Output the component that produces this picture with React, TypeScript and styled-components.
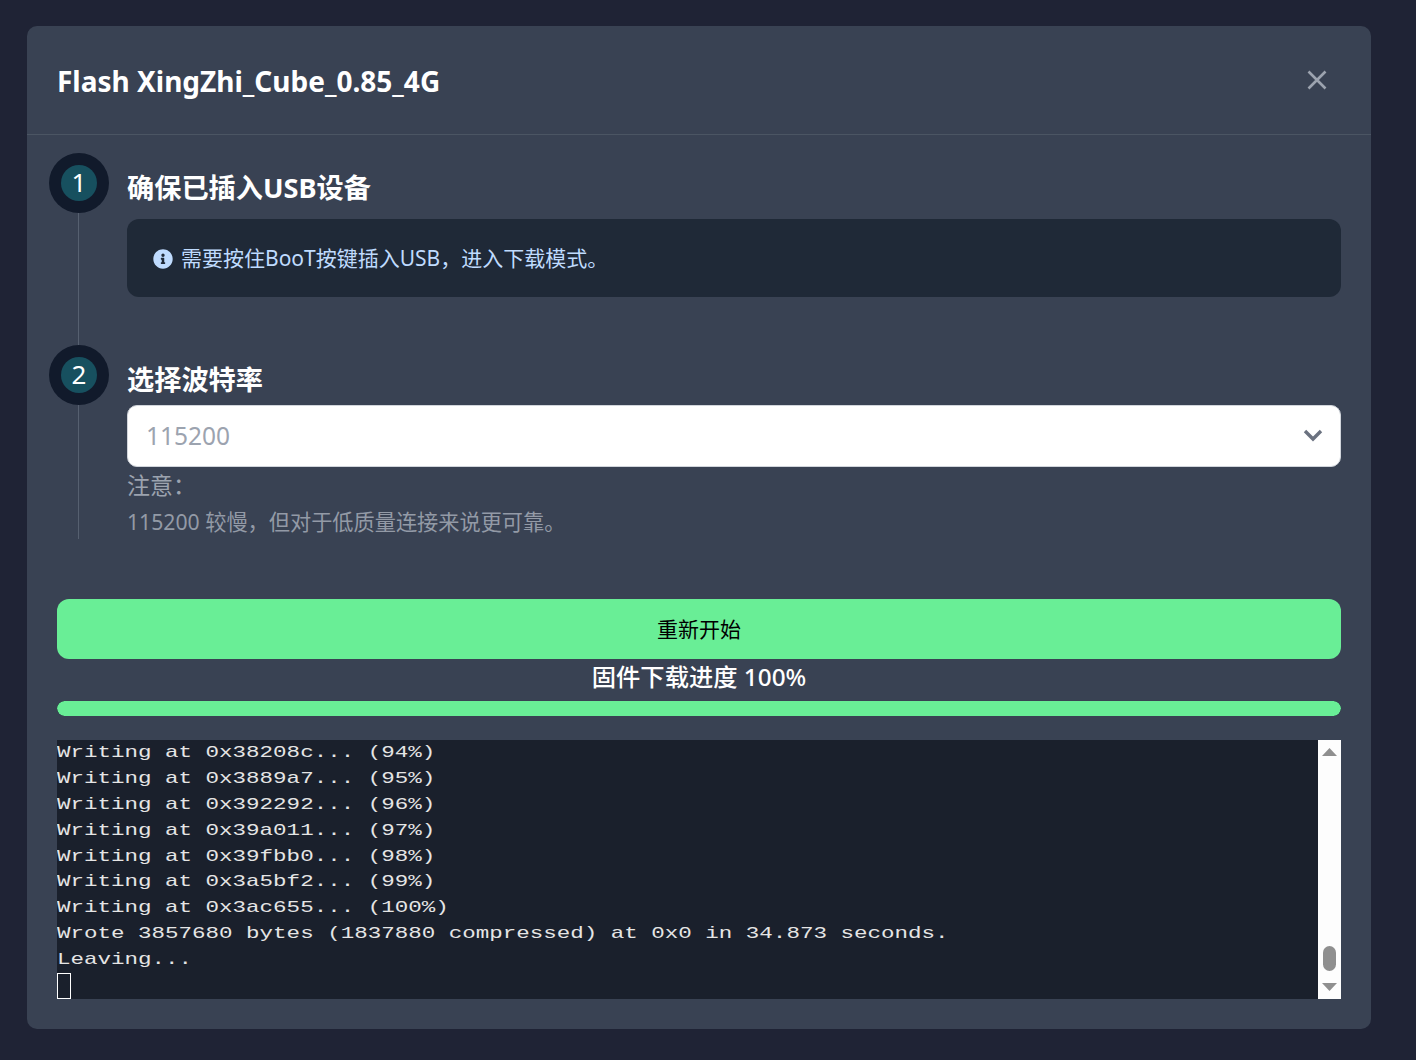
import React from 'react';
import styled, { createGlobalStyle } from 'styled-components';
import { FaInfoCircle } from 'react-icons/fa';

const Global = createGlobalStyle`
  html, body { margin: 0; padding: 0; background: #1f2335; }
  body { font-family: "Noto Sans", "Noto Sans CJK SC", sans-serif; overflow: hidden; }
  * { box-sizing: border-box; }
`;

const Page = styled.div`
  width: 1416px;
  height: 1060px;
  padding: 26px 45px 31px 27px;
`;

const Modal = styled.div`
  height: 1003px;
  background: #394253;
  border-radius: 10px;
  display: flex;
  flex-direction: column;
`;

const Header = styled.header`
  height: 109px;
  flex: none;
  padding: 0 42px 0 30px;
  display: flex;
  align-items: center;
  justify-content: space-between;
  border-bottom: 1px solid #4b5563;
`;

const Title = styled.h2`
  margin: 2px 0 0;
  color: #fff;
  font-size: 28px;
  line-height: 36px;
  font-weight: 700;
`;

const Close = styled.button`
  width: 24px;
  height: 24px;
  padding: 0;
  border: 0;
  background: none;
  color: #9ca3af;
  display: flex;
  align-items: center;
  justify-content: center;
`;

const Body = styled.div`
  flex: 1;
  padding: 18px 30px 0;
  display: flex;
  flex-direction: column;
`;

const Steps = styled.div`
  margin-left: -8px;
  display: flex;
  flex-direction: column;
`;

const Step = styled.section<{ $h: number }>`
  height: ${p => p.$h}px;
  display: flex;
  gap: 18px;
`;

const Rail = styled.div`
  width: 60px;
  flex: none;
  display: flex;
  flex-direction: column;
  align-items: center;
`;

const Badge = styled.div`
  width: 60px;
  height: 60px;
  flex: none;
  border-radius: 50%;
  background: #111a2b;
  display: flex;
  align-items: center;
  justify-content: center;
`;

const BadgeInner = styled.div`
  width: 36px;
  height: 36px;
  border-radius: 50%;
  background: #17505f;
  color: #fff;
  font-size: 26px;
  line-height: 34px;
  text-align: center;
`;

const RailLine = styled.div`
  flex: 1;
  width: 1px;
  margin-right: 1px;
  background: #566070;
`;

const StepBody = styled.div`
  flex: 1;
  min-width: 0;
`;

const StepTitle = styled.h3<{ $top: number; $bottom: number }>`
  margin: ${p => p.$top}px 0 ${p => p.$bottom}px;
  color: #fff;
  font-size: 27.2px;
  line-height: 38px;
  font-weight: 700;
`;

const InfoBox = styled.div`
  height: 78px;
  padding: 0 26px 2px;
  background: #1f2937;
  border-radius: 12px;
  color: #bfdbfe;
  font-size: 21px;
  display: flex;
  align-items: center;
  gap: 8px;
`;

const InfoIcon = styled(FaInfoCircle)`
  margin-top: 4px;
  flex: none;
`;

const Select = styled.div`
  height: 62px;
  padding: 0 17px 2px 18px;
  background: #fff;
  border: 1px solid #d1d5db;
  border-radius: 10px;
  color: #9ca3af;
  font-size: 24.5px;
  display: flex;
  align-items: center;
  justify-content: space-between;
`;

const NoteHead = styled.div`
  color: #9ca3af;
  font-size: 23px;
  line-height: 36px;
`;

const NoteText = styled.div`
  color: #939aa6;
  font-size: 21.2px;
  line-height: 38px;
`;

const Restart = styled.button`
  margin-top: 60px;
  height: 60px;
  flex: none;
  padding: 0 0 2px;
  border: 0;
  border-radius: 12px;
  background: #69ee96;
  color: #000;
  font: inherit;
  font-size: 21px;
`;

const ProgressLabel = styled.div`
  height: 42px;
  text-align: center;
  color: #fff;
  font-size: 24.3px;
  line-height: 36px;
  font-weight: 500;
`;

const ProgressTrack = styled.div`
  height: 15px;
  flex: none;
  border-radius: 8px;
  background: #1f2937;
  overflow: hidden;
`;

const ProgressFill = styled.div`
  height: 100%;
  background: #69ee96;
  border-radius: 8px;
`;

const Terminal = styled.div`
  margin-top: 24px;
  height: 259px;
  flex: none;
  display: flex;
  background: #1a202c;
`;

const Output = styled.div`
  flex: 1;
  min-width: 0;
  overflow: hidden;
`;

const Line = styled.div`
  height: 25.9px;
  font-family: "Liberation Mono", monospace;
  font-size: 17px;
  line-height: 26px;
  color: #e5e5e5;
  white-space: pre;
  transform: scaleX(1.324);
  transform-origin: left center;
`;

const Cursor = styled.div`
  width: 14px;
  height: 26px;
  margin-top: -0.1px;
  border: 1px solid #fff;
`;

const Scrollbar = styled.div`
  width: 23px;
  flex: none;
  background: #fdfdfd;
  display: flex;
  flex-direction: column;
  align-items: center;
  padding: 8px 0;
  justify-content: space-between;
`;

const Thumb = styled.div`
  width: 13px;
  height: 25px;
  margin-top: auto;
  margin-bottom: 12px;
  border-radius: 7px;
  background: #8f8f8f;
`;

const lines = [
  'Writing at 0x38208c... (94%)',
  'Writing at 0x3889a7... (95%)',
  'Writing at 0x392292... (96%)',
  'Writing at 0x39a011... (97%)',
  'Writing at 0x39fbb0... (98%)',
  'Writing at 0x3a5bf2... (99%)',
  'Writing at 0x3ac655... (100%)',
  'Wrote 3857680 bytes (1837880 compressed) at 0x0 in 34.873 seconds.',
  'Leaving...',
];

export default function App() {
  return (
    <Page>
      <Global />
      <Modal>
        <Header>
          <Title>Flash XingZhi_Cube_0.85_4G</Title>
          <Close aria-label="close">
            <svg width="20" height="20" viewBox="0 0 20 20" fill="none" stroke="currentColor" strokeWidth="2.6">
              <path d="M1.5 1.5 18.5 18.5M18.5 1.5 1.5 18.5" />
            </svg>
          </Close>
        </Header>
        <Body>
          <Steps>
            <Step $h={192}>
              <Rail>
                <Badge><BadgeInner>1</BadgeInner></Badge>
                <RailLine />
              </Rail>
              <StepBody>
                <StepTitle $top={16} $bottom={12}>确保已插入USB设备</StepTitle>
                <InfoBox>
                  <InfoIcon size={20} />
                  <span>需要按住BooT按键插入USB，进入下载模式。</span>
                </InfoBox>
              </StepBody>
            </Step>
            <Step $h={194}>
              <Rail>
                <Badge><BadgeInner>2</BadgeInner></Badge>
                <RailLine />
              </Rail>
              <StepBody>
                <StepTitle $top={16} $bottom={6}>选择波特率</StepTitle>
                <Select>
                  <span>115200</span>
                  <svg width="20" height="14" viewBox="0 0 20 14" fill="none" stroke="#6b7280" strokeWidth="3.4">
                    <path d="M2 3 10 11 18 3" />
                  </svg>
                </Select>
                <NoteHead>注意：</NoteHead>
                <NoteText>115200 较慢，但对于低质量连接来说更可靠。</NoteText>
              </StepBody>
            </Step>
          </Steps>
          <Restart>重新开始</Restart>
          <ProgressLabel>固件下载进度 100%</ProgressLabel>
          <ProgressTrack><ProgressFill style={{ width: '100%' }} /></ProgressTrack>
          <Terminal>
            <Output>
              {lines.map(l => <Line key={l}>{l}</Line>)}
              <Cursor />
            </Output>
            <Scrollbar>
              <svg width="15" height="8" viewBox="0 0 15 8"><path d="M7.5 0 15 8H0Z" fill="#8f8f8f" /></svg>
              <Thumb />
              <svg width="15" height="8" viewBox="0 0 15 8"><path d="M0 0H15L7.5 8Z" fill="#8f8f8f" /></svg>
            </Scrollbar>
          </Terminal>
        </Body>
      </Modal>
    </Page>
  );
}
